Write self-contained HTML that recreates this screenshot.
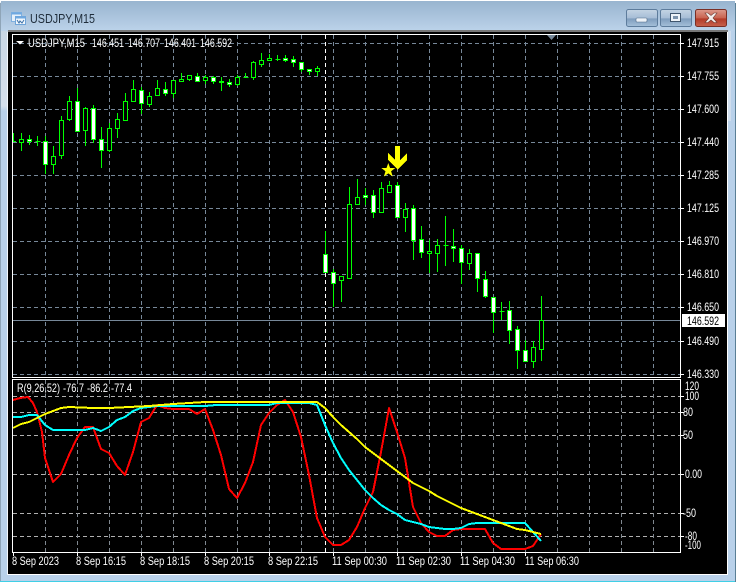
<!DOCTYPE html>
<html><head><meta charset="utf-8"><style>
html,body{margin:0;padding:0;background:#fff;width:738px;height:582px;overflow:hidden}
svg{display:block;position:absolute;left:0;top:0}
text{font-family:"Liberation Sans",sans-serif;font-size:12px;fill:#fff}
</style></head><body>
<svg width="738" height="582" viewBox="0 0 738 582" xmlns="http://www.w3.org/2000/svg">
<defs>
<linearGradient id="tb" x1="0" y1="0" x2="0" y2="1"><stop offset="0" stop-color="#98b4cf"/><stop offset="1" stop-color="#bcd3ea"/></linearGradient>
<linearGradient id="ls" x1="0" y1="0" x2="0" y2="1"><stop offset="0" stop-color="#c8d6e4"/><stop offset=".3" stop-color="#d5e0ec"/><stop offset=".32" stop-color="#b9d1ea"/><stop offset="1" stop-color="#b9d1ea"/></linearGradient>
<linearGradient id="bt" x1="0" y1="0" x2="0" y2="1"><stop offset="0" stop-color="#c4d4e4"/><stop offset=".5" stop-color="#a6bdd6"/><stop offset=".55" stop-color="#7f9dbd"/><stop offset="1" stop-color="#a5c0da"/></linearGradient>
<linearGradient id="cl" x1="0" y1="0" x2="0" y2="1"><stop offset="0" stop-color="#dc9a8c"/><stop offset=".5" stop-color="#c9634f"/><stop offset=".55" stop-color="#b23a27"/><stop offset="1" stop-color="#c8624c"/></linearGradient>
</defs>
<path d="M0 581V5Q0 1 4 1H731Q735 1 735 5V581Z" fill="#b9d1ea"/>
<rect x="1" y="1" width="734" height="30" fill="url(#tb)"/>
<rect x="1" y="31" width="7" height="250" fill="url(#ls)"/>
<rect x="728" y="31" width="7" height="550" fill="#b9d1ea"/>
<rect x="728" y="31" width="3" height="90" fill="#cfdded"/>
<rect x="0" y="581" width="736" height="1" fill="#3fcfe6"/>
<rect x="735" y="3" width="1" height="579" fill="#5a7f96"/>
<rect x="0" y="3" width="1" height="578" fill="#8fa5b8"/>

<!-- icon -->
<rect x="11.5" y="12.5" width="10" height="9" fill="#e6f0fa" stroke="#7fb0e0"/>
<rect x="11.5" y="12.5" width="10" height="2" fill="#6fa8e0"/>
<rect x="15.5" y="16.5" width="10" height="8" fill="#f2f7fc" stroke="#6fa4d8"/>
<rect x="15.5" y="16.5" width="10" height="2" fill="#6fa8e0"/>
<path d="M17 20l2 3 1-2 2 2 2-3" fill="none" stroke="#3a70a8"/>
<text x="30" y="23" style="font-size:13px;fill:#1e2c3a" textLength="65" lengthAdjust="spacingAndGlyphs">USDJPY,M15</text>

<!-- buttons -->
<rect x="626.5" y="9.5" width="31" height="17" rx="2" fill="url(#bt)" stroke="#5d7c9c"/>
<rect x="636" y="18" width="11" height="4" rx="1" fill="#eef3f8" stroke="#4f6a86" stroke-width=".6"/>
<rect x="660.5" y="9.5" width="31" height="17" rx="2" fill="url(#bt)" stroke="#5d7c9c"/>
<rect x="670.5" y="13.5" width="10" height="8" fill="#eef3f8" stroke="#3f566e"/>
<rect x="673" y="16" width="5" height="3" fill="#7c93ac"/>
<rect x="695.5" y="9.5" width="31" height="17" rx="2" fill="url(#cl)" stroke="#7a2f25"/>
<path d="M705 13l3 0 3 2.500 3-2.500 3 0-4 5 4 4.500-3 0-3-2.500-3 2.500-3 0 4-4.500z" fill="#f4f0ee" stroke="#6b3a32" stroke-width=".6"/>

<!-- chart area -->
<rect x="8" y="31" width="719" height="543" fill="#000"/>
<rect x="8" y="30" width="720" height="2" fill="#777"/>
<rect x="8" y="574" width="720" height="1" fill="#fff"/>
<rect x="727" y="32" width="1" height="543" fill="#fff"/>
<rect x="7" y="32" width="1" height="543" fill="#f4f8fc"/>

<g shape-rendering="crispEdges" fill="none">
<!-- main grid -->
<path stroke="#778899" stroke-dasharray="4 3" d="M13 43.500H680M13 76.500H680M13 109.500H680M13 142.500H680M13 175.500H680M13 208.500H680M13 241.500H680M13 274.500H680M13 307.500H680M13 341.500H680M13 374.500H680"/>
<path stroke="#778899" stroke-dasharray="4 3" d="M45.500 35V377M77.500 35V377M109.500 35V377M141.500 35V377M173.500 35V377M205.500 35V377M237.500 35V377M269.500 35V377M301.500 35V377M333.500 35V377M365.500 35V377M397.500 35V377M429.500 35V377M461.500 35V377M493.500 35V377M525.500 35V377M557.500 35V377M589.500 35V377M621.500 35V377M653.500 35V377"/>
<path stroke="#fff" stroke-dasharray="4 3" d="M325.500 35V377"/>
<path stroke="#778899" d="M13 320.500H680"/>
<!-- indicator grid -->
<path stroke="#b0b0b0" stroke-dasharray="4 3" d="M13 396.500H680M13 412.500H680M13 435.500H680M13 474.500H680M13 513.500H680M13 536.500H680"/>
<path stroke="#808890" stroke-dasharray="4 3" d="M45.500 380V552M77.500 380V552M109.500 380V552M141.500 380V552M173.500 380V552M205.500 380V552M237.500 380V552M269.500 380V552M301.500 380V552M333.500 380V552M365.500 380V552M397.500 380V552M429.500 380V552M461.500 380V552M493.500 380V552M525.500 380V552M557.500 380V552M589.500 380V552M621.500 380V552M653.500 380V552"/>
<path stroke="#fff" stroke-dasharray="4 3" d="M325.500 380V552"/>
<!-- frames -->
<path stroke="#fff" d="M12.500 34.500H680.500V377.500H12.500ZM12.500 379.500H680.500V552.500H12.500Z"/>
<!-- ticks -->
<path stroke="#fff" d="M681 43.500h3M681 76.500h3M681 109.500h3M681 142.500h3M681 175.500h3M681 208.500h3M681 241.500h3M681 274.500h3M681 307.500h3M681 341.500h3M681 374.500h3M681 396.500h3M681 412.500h3M681 435.500h3M681 474.500h3M681 513.500h3M681 536.500h3M13.500 553v3M77.500 553v3M141.500 553v3M205.500 553v3M269.500 553v3M333.500 553v3M397.500 553v3M461.500 553v3M525.500 553v3"/>

<!-- wicks -->
<path stroke="#00ff00" d="M13.500 133V141M21.500 133V151M29.500 135V145M37.500 136V146M45.500 136V174M53.500 146V174M61.500 116V159M69.500 96V121M77.500 88V132M85.500 107V146M93.500 105V143M101.500 127V168M109.500 123V152M117.500 113V138M125.500 93V121M133.500 80V102M141.500 87V114M149.500 92V107M157.500 80V96M165.500 82V96M173.500 80V98M181.500 73V82M189.500 75V81M197.500 73V82M205.500 75V84M213.500 76V84M221.500 77V91M229.500 79V87M237.500 75V86M245.500 73V77M253.500 61V80M261.500 53V67M269.500 54V61M277.500 55V61M285.500 55V62M293.500 56V67M301.500 62V72M309.500 69V75M317.500 66V76M325.500 231V273M333.500 269V307M341.500 276V302M349.500 187V279M357.500 179V205M365.500 188V205M373.500 190V218M381.500 182V213M389.500 181V192M397.500 182V217M405.500 203V232M413.500 205V260M421.500 226V258M429.500 240V273M437.500 239V272M445.500 216V266M453.500 229V262M461.500 245V284M469.500 249V270M477.500 253V292M485.500 271V298M493.500 297V333M501.500 302V320M509.500 301V344M517.500 326V369M525.500 340V362M533.500 341V368M541.500 296V361"/>
<path stroke="#00ff00" d="M13 141.500h3M35.500 141.500h5M275.500 59.500h5M243.500 77.500h5M443.500 245.500h5M499.500 311.500h5"/>
<!-- hollow bodies -->
<path stroke="#00ff00" fill="#000" d="M19.500 139.500h4v3h-4zM51.500 156.500h4v8h-4zM59.500 120.500h4v35h-4zM67.500 101.500h4v18h-4zM83.500 108.500h4v22h-4zM107.500 128.500h4v22h-4zM115.500 119.500h4v9h-4zM123.500 101.500h4v19h-4zM131.500 89.500h4v12h-4zM147.500 96.500h4v8h-4zM155.500 88.500h4v7h-4zM171.500 80.500h4v13h-4zM179.500 79.500h4v2h-4zM187.500 75.500h4v4h-4zM203.500 77.500h4v3h-4zM235.500 77.500h4v7h-4zM251.500 62.500h4v15h-4zM259.500 60.500h4v4h-4zM267.500 58.500h4v2h-4zM315.500 68.500h4v3h-4zM339.500 276.500h4v4h-4zM347.500 204.500h4v74h-4zM355.500 197.500h4v7h-4zM379.500 188.500h4v24h-4zM387.500 185.500h4v7h-4zM403.500 209.500h4v8h-4zM427.500 251.500h4v2h-4zM435.500 245.500h4v8h-4zM467.500 253.500h4v10h-4zM531.500 347.500h4v14h-4zM539.500 320.500h4v29h-4z"/>
<!-- filled bodies -->
<path stroke="#00ff00" fill="#fff" d="M27.500 139.500h4v2h-4zM43.500 141.500h4v23h-4zM75.500 101.500h4v30h-4zM91.500 108.500h4v31h-4zM99.500 139.500h4v11h-4zM139.500 90.500h4v13h-4zM163.500 89.500h4v4h-4zM195.500 76.500h4v5h-4zM211.500 77.500h4v4h-4zM219.500 81.500h4v1h-4zM227.500 82.500h4v2h-4zM283.500 58.500h4v2h-4zM291.500 59.500h4v3h-4zM299.500 62.500h4v7h-4zM307.500 69.500h4v2h-4zM323.500 254.500h4v18h-4zM331.500 272.500h4v11h-4zM363.500 195.500h4v2h-4zM371.500 195.500h4v17h-4zM395.500 185.500h4v32h-4zM411.500 208.500h4v32h-4zM419.500 239.500h4v13h-4zM451.500 246.500h4v2h-4zM459.500 248.500h4v14h-4zM475.500 253.500h4v25h-4zM483.500 279.500h4v17h-4zM491.500 297.500h4v15h-4zM507.500 310.500h4v20h-4zM515.500 329.500h4v21h-4zM523.500 350.500h4v11h-4z"/>
</g>

<!-- arrow & star -->
<path shape-rendering="crispEdges" fill="#ffff00" d="M395 146h5v14l7-7v7l-9.500 9.500-9.500-9.500v-7l7 7z"/>
<path fill="#ffff00" d="M388.300 163l1.800 5h5.200l-4.200 3.200 1.600 5.300-4.400-3.100-4.400 3.100 1.600-5.300-4.200-3.200h5.200z"/>
<path fill="#778899" d="M547 35h9l-4.500 5z"/>
<path fill="#fff" d="M16 41h8l-4 3.500z"/>

<!-- indicator lines -->
<svg x="0" y="0" width="738" height="582">
<clipPath id="ic"><rect x="13" y="380" width="667" height="172"/></clipPath>
<g clip-path="url(#ic)" fill="none" stroke-width="2" shape-rendering="crispEdges" stroke-linejoin="round">
<polyline stroke="#ff0000" points="13,400 20,398 28,397 33,403 37,412 42,432 45,458 53,482 61,474 69,455 77,438 85,427 93,427 101,449 109,453 117,466 125,475 133,452 141,422 149,418 157,405 165,408 173,409 181,409 189,409 197,414 205,409 213,430 221,455 229,489 237,498 245,483 253,462 261,425 269,413 277,405 285,400 293,412 301,437 309,475 317,518 325,537 333,545 341,545 349,540 357,527 365,508 373,492 381,452 389,408 397,432 405,458 413,507 421,523 429,532 437,536 445,536 453,530 461,529 469,529 477,529 485,529 493,543 501,549 509,549 517,549 525,549 533,546 541,534"/>
<polyline stroke="#00ffff" points="13,417 21,417 29,415 37,415 45,425 53,430 61,430 69,430 77,430 85,430 93,428 101,431 109,427 117,420 125,417 133,411 141,408 149,407 157,406 165,406 205,406 216,405 221,405 245,405 269,405 277,403 309,403 317,405 325,425 333,443 341,458 349,470 357,480 365,490 373,498 381,505 389,510 397,514 405,520 413,522 421,524 429,527 437,528 445,529 453,529 461,528 469,524 477,523 495,523 525,523 533,532 541,541"/>
<polyline stroke="#ffff00" points="13,428 21,424 29,422 37,418 45,414 53,411 61,408 69,407 93,408 109,408 149,406 173,404 189,403 205,402 317,402 325,408 333,417 341,425 349,432 357,439 365,447 373,453 381,459 389,465 397,471 405,477 413,483 421,487 429,491 437,496 445,500 453,504 461,508 469,511 477,514 485,517 493,520 501,523 509,526 517,529 525,530 541,534"/>
</g>
</svg>

<!-- text -->
<text x="28" y="47" textLength="57" lengthAdjust="spacingAndGlyphs">USDJPY,M15</text>
<text x="92" y="47" textLength="32" lengthAdjust="spacingAndGlyphs">146.451</text>
<text x="128" y="47" textLength="32" lengthAdjust="spacingAndGlyphs">146.707</text>
<text x="164" y="47" textLength="32" lengthAdjust="spacingAndGlyphs">146.401</text>
<text x="200" y="47" textLength="32" lengthAdjust="spacingAndGlyphs">146.592</text>
<text x="17" y="392" textLength="43" lengthAdjust="spacingAndGlyphs">R(9,26,52)</text>
<text x="63" y="392" textLength="21" lengthAdjust="spacingAndGlyphs">-76.7</text>
<text x="87" y="392" textLength="21" lengthAdjust="spacingAndGlyphs">-86.2</text>
<text x="111" y="392" textLength="21" lengthAdjust="spacingAndGlyphs">-77.4</text>

<text x="687" y="47" textLength="32" lengthAdjust="spacingAndGlyphs">147.915</text>
<text x="687" y="80" textLength="32" lengthAdjust="spacingAndGlyphs">147.755</text>
<text x="687" y="113" textLength="32" lengthAdjust="spacingAndGlyphs">147.600</text>
<text x="687" y="146" textLength="32" lengthAdjust="spacingAndGlyphs">147.440</text>
<text x="687" y="179" textLength="32" lengthAdjust="spacingAndGlyphs">147.285</text>
<text x="687" y="212" textLength="32" lengthAdjust="spacingAndGlyphs">147.125</text>
<text x="687" y="245" textLength="32" lengthAdjust="spacingAndGlyphs">146.970</text>
<text x="687" y="278" textLength="32" lengthAdjust="spacingAndGlyphs">146.810</text>
<text x="687" y="311" textLength="32" lengthAdjust="spacingAndGlyphs">146.650</text>
<rect x="682" y="314" width="43" height="13" fill="#fff"/>
<text x="687" y="325" textLength="32" lengthAdjust="spacingAndGlyphs" style="fill:#000">146.592</text>
<text x="687" y="345" textLength="32" lengthAdjust="spacingAndGlyphs">146.490</text>
<text x="687" y="378" textLength="32" lengthAdjust="spacingAndGlyphs">146.330</text>

<text x="685" y="390" textLength="14" lengthAdjust="spacingAndGlyphs">120</text>
<text x="685" y="400" textLength="14" lengthAdjust="spacingAndGlyphs">100</text>
<text x="683" y="416" textLength="10" lengthAdjust="spacingAndGlyphs">80</text>
<text x="683" y="439" textLength="10" lengthAdjust="spacingAndGlyphs">50</text>
<text x="685" y="478" textLength="17" lengthAdjust="spacingAndGlyphs">0.00</text>
<text x="683" y="517" textLength="13" lengthAdjust="spacingAndGlyphs">-50</text>
<text x="685" y="540" textLength="12" lengthAdjust="spacingAndGlyphs">-80</text>
<text x="685" y="549" textLength="16" lengthAdjust="spacingAndGlyphs">-100</text>

<text x="12" y="565" textLength="47" lengthAdjust="spacingAndGlyphs">8 Sep 2023</text>
<text x="76" y="565" textLength="50" lengthAdjust="spacingAndGlyphs">8 Sep 16:15</text>
<text x="140" y="565" textLength="50" lengthAdjust="spacingAndGlyphs">8 Sep 18:15</text>
<text x="204" y="565" textLength="50" lengthAdjust="spacingAndGlyphs">8 Sep 20:15</text>
<text x="268" y="565" textLength="50" lengthAdjust="spacingAndGlyphs">8 Sep 22:15</text>
<text x="332" y="565" textLength="55" lengthAdjust="spacingAndGlyphs">11 Sep 00:30</text>
<text x="396" y="565" textLength="55" lengthAdjust="spacingAndGlyphs">11 Sep 02:30</text>
<text x="460" y="565" textLength="55" lengthAdjust="spacingAndGlyphs">11 Sep 04:30</text>
<text x="525" y="565" textLength="54" lengthAdjust="spacingAndGlyphs">11 Sep 06:30</text>
</svg>
</body></html>
